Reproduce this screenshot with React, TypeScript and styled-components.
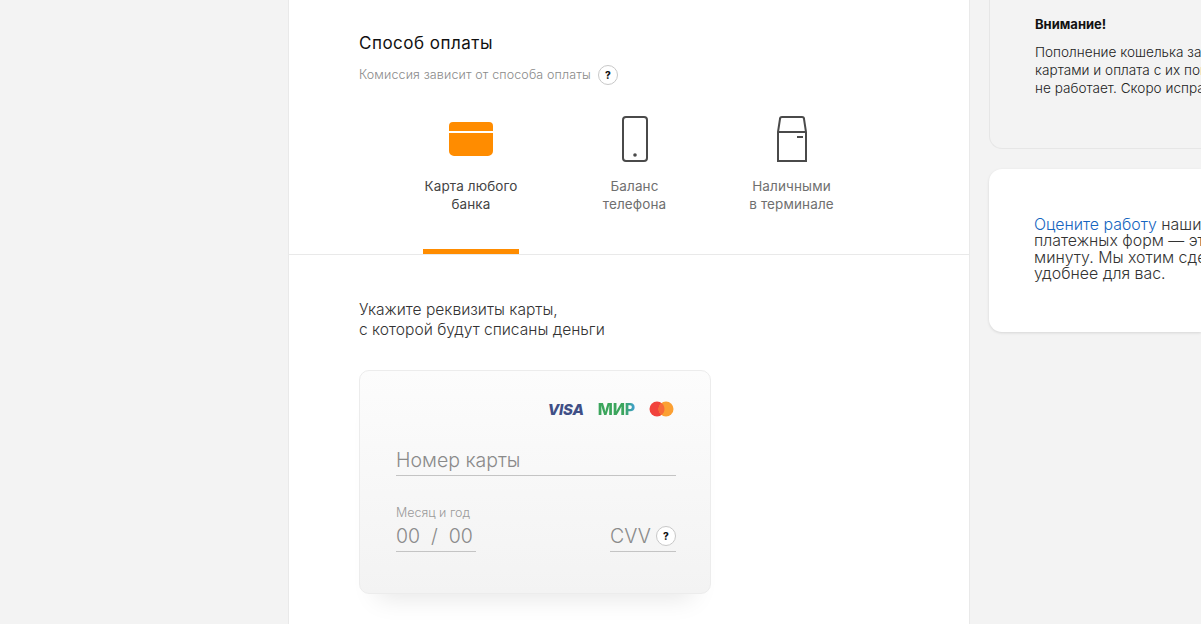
import styled, { createGlobalStyle } from 'styled-components';

const GlobalStyle = createGlobalStyle`
  html, body {
    margin: 0;
    padding: 0;
    background: #f3f3f3;
  }
  * {
    box-sizing: border-box;
  }
`;

const Page = styled.div`
  display: flex;
  width: 1201px;
  height: 624px;
  overflow: hidden;
  background: #f3f3f3;
  font-family: 'Inter', 'Noto Sans', sans-serif;
  font-weight: 300;
`;

const LeftGap = styled.div`
  flex: 0 0 288px;
`;

const Main = styled.main`
  flex: 0 0 682px;
  background: #fff;
  border-left: 1px solid #e9e9e9;
  border-right: 1px solid #e9e9e9;
`;

const MethodSection = styled.section`
  height: 255px;
  padding: 33px 0 0 70px;
  border-bottom: 1px solid #e9e9e9;
`;

const Title = styled.h2`
  margin: 0;
  font-size: 17px;
  line-height: 20px;
  font-weight: 400;
  letter-spacing: 0.5px;
  color: #111;
`;

const Hint = styled.div`
  display: flex;
  align-items: center;
  gap: 7px;
  margin-top: 12px;
  font-size: 12.5px;
  line-height: 20px;
  letter-spacing: 0.13px;
  color: #8a8a8a;
`;

const HelpMark = styled.span`
  display: inline-flex;
  align-items: center;
  justify-content: center;
  width: 20px;
  height: 20px;
  border: 1px solid #c8c8c8;
  border-radius: 50%;
  background: #fff;
  font-size: 10px;
  font-weight: 800;
  letter-spacing: 0;
  color: #111;
`;

const Tabs = styled.div`
  display: flex;
  gap: 83px;
  margin: 31px 0 0 64px;
`;

const Tab = styled.div<{ $active?: boolean; $width: number }>`
  display: flex;
  flex-direction: column;
  align-items: center;
  width: ${(p) => p.$width}px;
  height: 138px;
  border-bottom: 5px solid ${(p) => (p.$active ? '#ff8c00' : 'transparent')};
  font-size: 13.5px;
  line-height: 18px;
  letter-spacing: 0.12px;
  text-align: center;
  white-space: nowrap;
  color: ${(p) => (p.$active ? '#444' : '#6f6f6f')};
  font-weight: 400;
`;

const TabIcon = styled.svg`
  display: block;
  flex: none;
  margin-bottom: 15px;
`;

const CardSection = styled.section`
  padding: 45px 0 0 70px;
`;

const Lead = styled.p`
  margin: 0;
  font-size: 15.6px;
  line-height: 20px;
  color: #333;
`;

const CardForm = styled.div`
  width: 352px;
  height: 224px;
  margin-top: 30px;
  padding: 28px 34px 0 36px;
  border: 1px solid #ececec;
  border-radius: 10px;
  background: linear-gradient(#fcfcfc, #f3f3f3);
  box-shadow: 0 22px 24px -18px rgba(0, 0, 0, 0.1);
`;

const Brands = styled.div`
  display: flex;
  align-items: center;
  justify-content: flex-end;
  gap: 14px;
  height: 20px;
  padding-right: 2px;
`;

const VisaMark = styled.span`
  font-size: 15px;
  font-weight: 800;
  font-style: italic;
  letter-spacing: -0.2px;
  color: #3f4f86;
`;

const MirMark = styled.span`
  font-size: 16px;
  font-weight: 800;
  letter-spacing: -0.2px;
  background: linear-gradient(90deg, #3ba55c 72%, #3f9fd8 100%);
  -webkit-background-clip: text;
  background-clip: text;
  color: transparent;
`;

const FieldLine = styled.div<{ $width?: number }>`
  display: flex;
  align-items: center;
  justify-content: space-between;
  width: ${(p) => (p.$width ? `${p.$width}px` : '100%')};
  height: 32px;
  border-bottom: 1px solid #c4c4c4;
  font-size: 19.5px;
  color: #8a8a8a;
  white-space: pre;
`;

const CardNumber = styled.div`
  margin-top: 25px;
`;

const BottomRow = styled.div`
  display: flex;
  align-items: flex-end;
  justify-content: space-between;
  margin-top: 29px;
`;

const SmallLabel = styled.div`
  font-size: 12.5px;
  line-height: 15px;
  color: #9a9a9a;
`;

const Side = styled.aside`
  flex: 1;
  min-width: 0;
  padding-left: 19px;
  overflow: hidden;
`;

const Notice = styled.div`
  height: 149px;
  padding: 15px 0 0 45px;
  border: 1px solid #e6e6e6;
  border-top: 0;
  border-right: 0;
  border-radius: 0 0 0 13px;
  font-size: 13.6px;
  line-height: 18px;
  color: #222;
  white-space: nowrap;
`;

const NoticeTitle = styled.div`
  font-size: 13px;
  font-weight: 700;
  color: #111;
  margin-bottom: 10px;
`;

const Rate = styled.div`
  height: 163px;
  margin-top: 20px;
  padding: 47.5px 0 0 45px;
  border-radius: 13px 0 0 13px;
  background: #fff;
  box-shadow: 0 1px 3px rgba(0, 0, 0, 0.12);
  font-size: 15.9px;
  line-height: 16.5px;
  color: #333;
  white-space: nowrap;
`;

const RateLink = styled.a`
  color: #1565c0;
`;

export default function App() {
  return (
    <Page>
      <GlobalStyle />
      <LeftGap />
      <Main>
        <MethodSection>
          <Title>Способ оплаты</Title>
          <Hint>
            Комиссия зависит от способа оплаты
            <HelpMark>?</HelpMark>
          </Hint>
          <Tabs>
            <Tab $active $width={96}>
              <TabIcon width="44" height="46" viewBox="0 0 44 46">
                <path
                  d="M0 10a4 4 0 0 1 4-4h36a4 4 0 0 1 4 4v5H0z M0 17h44v18a5 5 0 0 1-5 5H5a5 5 0 0 1-5-5z"
                  fill="#ff8c00"
                />
              </TabIcon>
              Карта любого
              <br />
              банка
            </Tab>
            <Tab $width={65}>
              <TabIcon width="26" height="46" viewBox="0 0 26 46">
                <rect x="1" y="1" width="24" height="44" rx="3" fill="none" stroke="#4a4a4a" strokeWidth="2" />
                <circle cx="13" cy="39" r="1.8" fill="#4a4a4a" />
              </TabIcon>
              Баланс
              <br />
              телефона
            </Tab>
            <Tab $width={83}>
              <TabIcon width="30" height="46" viewBox="0 0 30 46">
                <path
                  d="M1 16 3 3a2 2 0 0 1 2-2h20a2 2 0 0 1 2 2l2 13v29H1z M1 16h28"
                  fill="none"
                  stroke="#4a4a4a"
                  strokeWidth="2"
                />
                <rect x="20" y="20" width="6" height="2" fill="#4a4a4a" />
              </TabIcon>
              Наличными
              <br />в терминале
            </Tab>
          </Tabs>
        </MethodSection>
        <CardSection>
          <Lead>
            Укажите реквизиты карты,
            <br />с которой будут списаны деньги
          </Lead>
          <CardForm>
            <Brands>
              <VisaMark>VISA</VisaMark>
              <MirMark>МИР</MirMark>
              <svg width="25" height="16" viewBox="0 0 25 16">
                <circle cx="8" cy="8" r="7.5" fill="#f1433c" />
                <circle cx="17" cy="8" r="7.5" fill="#fba033" />
                <path d="M12.5 2a7.5 7.5 0 0 1 0 12 7.5 7.5 0 0 1 0-12z" fill="#f7693a" />
              </svg>
            </Brands>
            <CardNumber>
              <FieldLine>Номер карты</FieldLine>
            </CardNumber>
            <BottomRow>
              <div>
                <SmallLabel>Месяц и год</SmallLabel>
                <FieldLine $width={80}>00  /  00</FieldLine>
              </div>
              <FieldLine $width={66}>
                CVV
                <HelpMark>?</HelpMark>
              </FieldLine>
            </BottomRow>
          </CardForm>
        </CardSection>
      </Main>
      <Side>
        <Notice>
          <NoticeTitle>Внимание!</NoticeTitle>
          Пополнение кошелька заграничными
          <br />
          картами и оплата с их помощью
          <br />
          не работает. Скоро исправим
        </Notice>
        <Rate>
          <RateLink>Оцените работу</RateLink> наших
          <br />
          платежных форм — это
          <br />
          минуту. Мы хотим сделать
          <br />
          удобнее для вас.
        </Rate>
      </Side>
    </Page>
  );
}
